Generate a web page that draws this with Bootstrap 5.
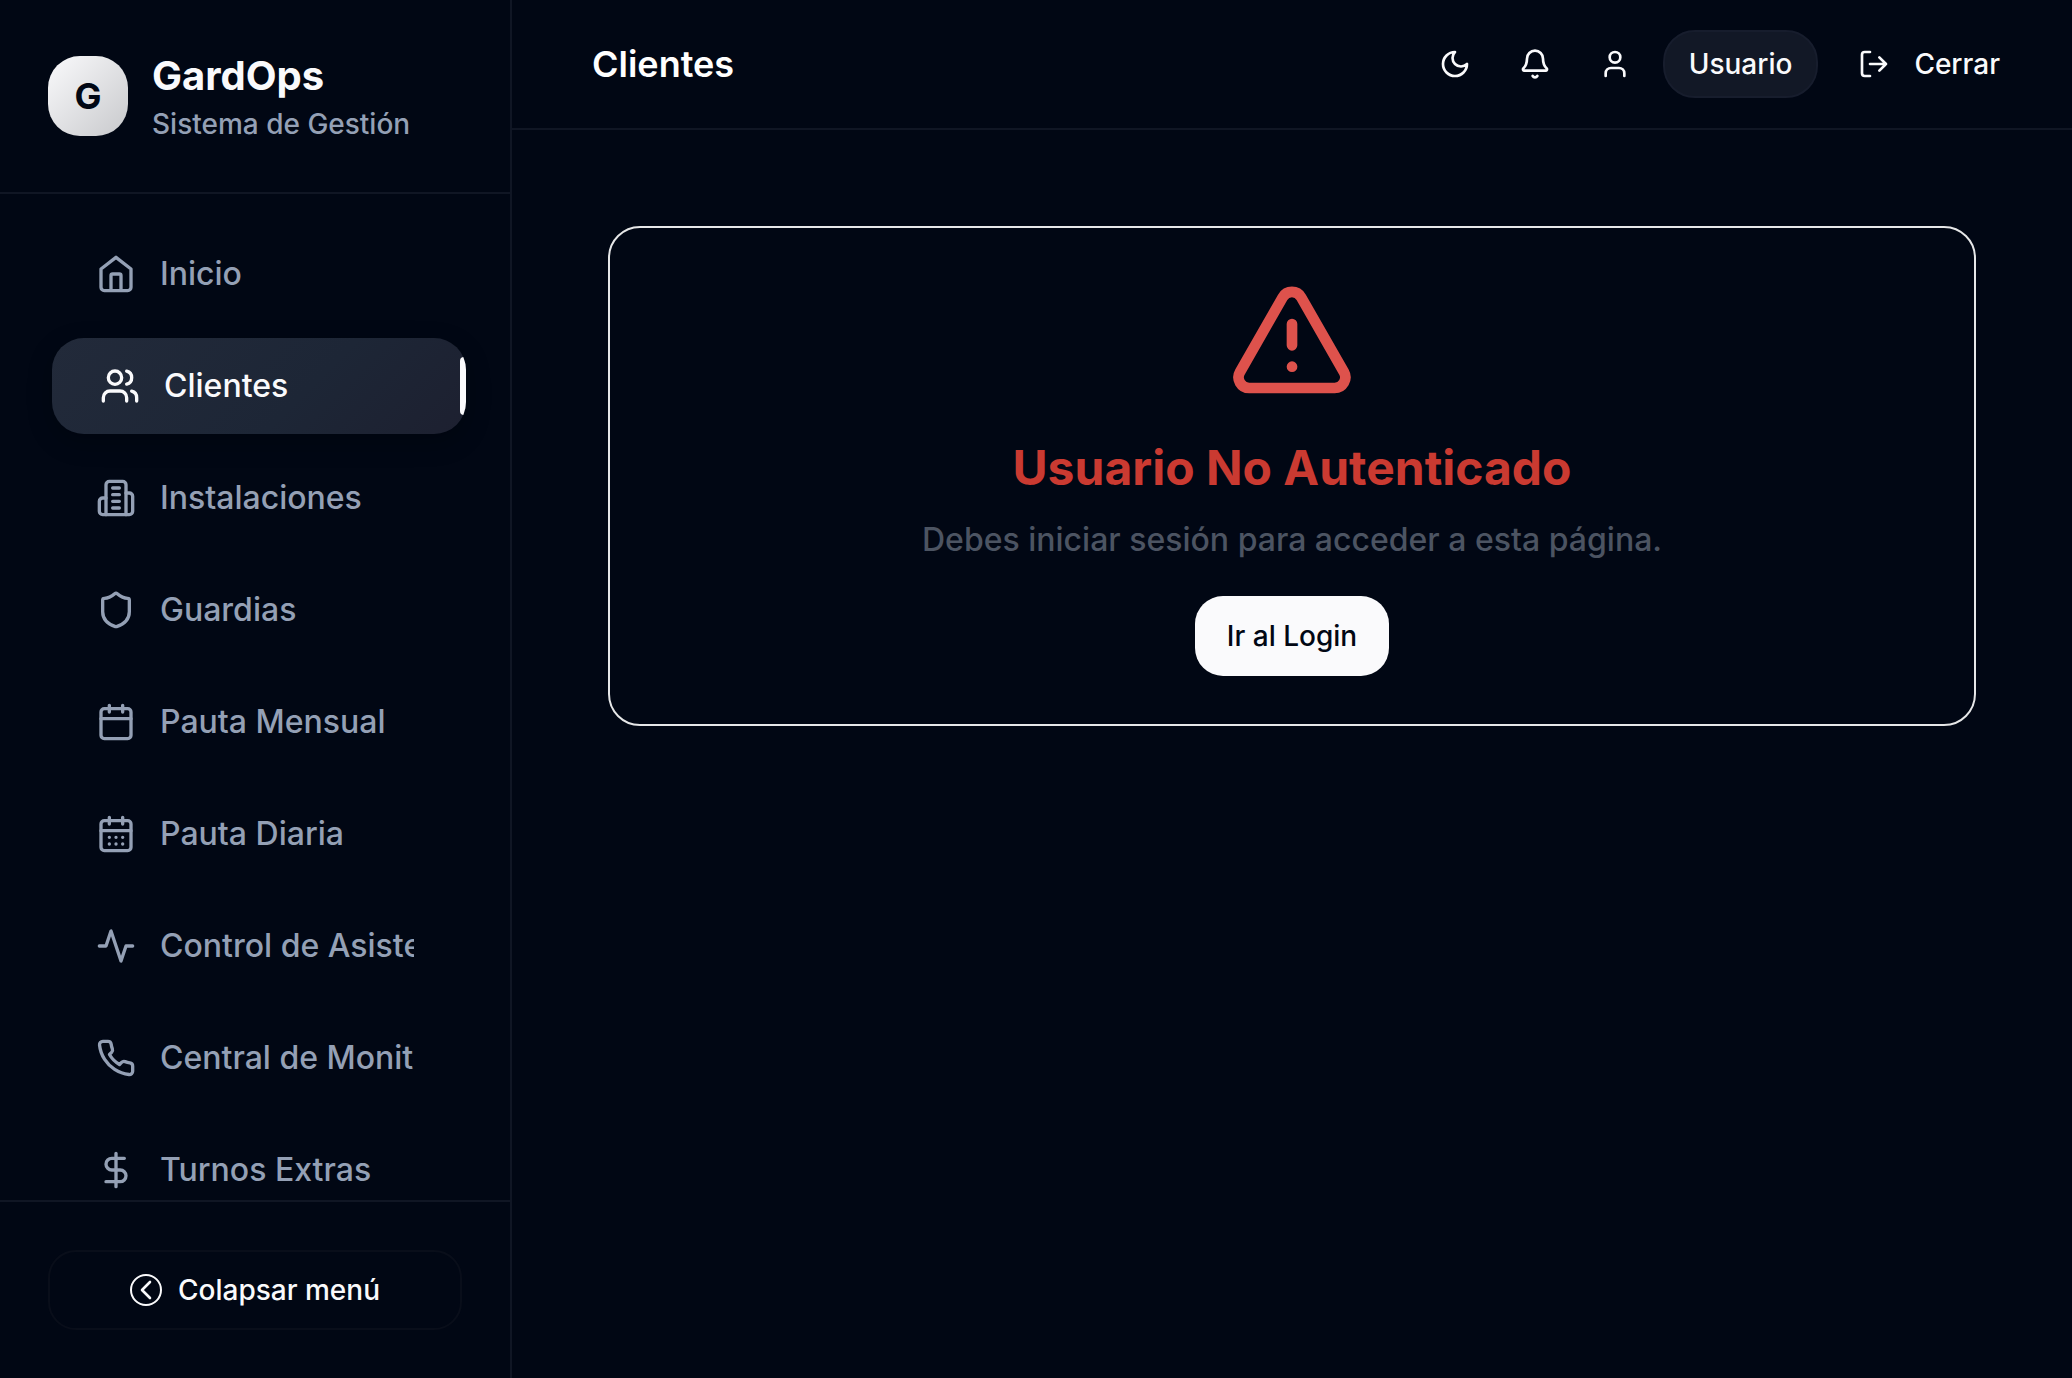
<!DOCTYPE html>
<html lang="es" data-bs-theme="dark">
<head>
<meta charset="utf-8">
<meta name="viewport" content="width=device-width, initial-scale=1">
<title>GardOps – Clientes</title>
<link rel="stylesheet" href="https://cdn.jsdelivr.net/npm/bootstrap@5.3.0/dist/css/bootstrap.min.css">
<style>
  :root { --page: #010714; --line: #101624; --ink: #fafafc; --muted-ink: #94a0b5; }
  body { background: var(--page); color: var(--ink); font-family: Inter, "Liberation Sans", sans-serif; font-size: 28px; line-height: 40px; }
  svg { fill: none; stroke: currentColor; stroke-width: 2; stroke-linecap: round; stroke-linejoin: round; flex-shrink: 0; display: block; }

  .side { width: 512px; border-right: 2px solid var(--line); }
  .side-head { padding: 48px; gap: 24px; border-bottom: 2px solid var(--line); }
  .logo { width: 80px; height: 80px; border-radius: 32px; font-size: 36px; background: linear-gradient(135deg, #fafafc, #c8c9cc); color: var(--page); }
  .brand-name { font-size: 40px; line-height: 56px; }
  .brand-sub { color: var(--muted-ink); font-weight: 500; }
  .side-nav { padding: 32px 48px; gap: 16px; min-height: 0; }
  .side-link { height: 96px; padding: 0 48px; gap: 24px; border-radius: 32px; color: var(--muted-ink); font-size: 32px; font-weight: 500; text-decoration: none; flex-shrink: 0; }
  .side-link:hover { color: var(--ink); }
  .side-link svg { width: 40px; height: 40px; }
  .side-link.active { color: var(--ink); background: linear-gradient(135deg, #222a3a, #1d2636 60%, #1d2030); box-shadow: 0 8px 24px #00000040; transform: translateX(4px); }
  .side-link.active::after { content: ""; position: absolute; right: 0; top: 20%; bottom: 20%; width: 6px; border-radius: 4px 0 0 4px; background: var(--ink); }
  .side-foot { padding: 48px; border-top: 2px solid var(--line); }
  .btn { --bs-btn-color: var(--ink); --bs-btn-font-size: 28px; --bs-btn-line-height: 40px; --bs-btn-font-weight: 500; --bs-btn-border-width: 0; --bs-btn-border-radius: 28px; }
  .btn-collapse { height: 80px; gap: 16px; border: 2px solid #090e1a; }
  .btn-collapse svg, .top-bar svg { width: 32px; height: 32px; }

  .top-bar { padding: 30px 48px 30px 80px; border-bottom: 2px solid var(--line); }
  .top-title { font-size: 36px; line-height: 56px; }
  .top-tools { gap: 16px; }
  .btn-tool { width: 64px; height: 64px; padding: 16px; }
  .btn-user { height: 68px; padding: 0 24px; border: 2px solid #171d2d; border-radius: 32px; background: #121826; }
  .btn-out { height: 64px; padding: 0 24px; gap: 24px; }

  .content-area { padding: 96px; }
  .alert-box { border: 2px solid #e6e7e8; border-radius: 32px; padding: 48px; }
  .alert-box svg { width: 128px; height: 128px; margin-bottom: 32px; color: #de524c; }
  .alert-box h2 { font-size: 48px; line-height: 64px; margin-bottom: 16px; color: #ca3a31; }
  .alert-box p { font-size: 32px; line-height: 48px; font-weight: 500; margin-bottom: 32px; color: #4c5462; }
  .btn-login { height: 80px; padding: 0 32px; --bs-btn-color: var(--page); --bs-btn-bg: #fafafc; --bs-btn-hover-color: var(--page); --bs-btn-hover-bg: #e2e4ea; }
</style>
<script src="https://cdn.jsdelivr.net/npm/bootstrap@5.3.0/dist/js/bootstrap.bundle.min.js" defer></script>
</head>
<body>
<div class="d-flex vh-100 overflow-hidden">
  <aside class="side d-flex flex-column flex-shrink-0">
    <div class="side-head d-flex align-items-center">
      <div class="logo d-flex align-items-center justify-content-center fw-bold">G</div>
      <div>
        <div class="brand-name fw-bold">GardOps</div>
        <div class="brand-sub">Sistema de Gestión</div>
      </div>
    </div>
    <nav class="side-nav d-flex flex-column flex-grow-1 overflow-hidden" aria-label="Principal">
      <a class="side-link d-flex align-items-center" href="#inicio">
        <svg viewBox="0 0 24 24"><path d="M15 21v-8a1 1 0 0 0-1-1h-4a1 1 0 0 0-1 1v8"/><path d="m3 9 9-7 9 7v11a2 2 0 0 1-2 2H5a2 2 0 0 1-2-2z"/></svg>
        <span class="flex-grow-1 overflow-hidden text-nowrap">Inicio</span></a>
      <a class="side-link active position-relative overflow-hidden d-flex align-items-center" href="#clientes" aria-current="page">
        <svg viewBox="0 0 24 24"><path d="M16 21v-2a4 4 0 0 0-4-4H6a4 4 0 0 0-4 4v2"/><circle cx="9" cy="7" r="4"/><path d="M22 21v-2a4 4 0 0 0-3-3.870M16 3.130a4 4 0 0 1 0 7.750"/></svg>
        <span class="flex-grow-1 overflow-hidden text-nowrap">Clientes</span></a>
      <a class="side-link d-flex align-items-center" href="#instalaciones">
        <svg viewBox="0 0 24 24"><path d="M6 22V4a2 2 0 0 1 2-2h8a2 2 0 0 1 2 2v18Z"/><path d="M6 12H4a2 2 0 0 0-2 2v6a2 2 0 0 0 2 2h2M18 9h2a2 2 0 0 1 2 2v9a2 2 0 0 1-2 2h-2M10 6h4M10 10h4M10 14h4M10 18h4"/></svg>
        <span class="flex-grow-1 overflow-hidden text-nowrap">Instalaciones</span></a>
      <a class="side-link d-flex align-items-center" href="#guardias">
        <svg viewBox="0 0 24 24"><path d="M20 13c0 5-3.500 7.500-7.660 8.950a1 1 0 0 1-.67-.01C7.500 20.500 4 18 4 13V6a1 1 0 0 1 1-1c2 0 4.500-1.200 6.240-2.720a1.170 1.170 0 0 1 1.520 0C14.510 3.810 17 5 19 5a1 1 0 0 1 1 1z"/></svg>
        <span class="flex-grow-1 overflow-hidden text-nowrap">Guardias</span></a>
      <a class="side-link d-flex align-items-center" href="#pauta-mensual">
        <svg viewBox="0 0 24 24"><path d="M8 2v4M16 2v4M3 10h18"/><rect x="3" y="4" width="18" height="18" rx="2"/></svg>
        <span class="flex-grow-1 overflow-hidden text-nowrap">Pauta Mensual</span></a>
      <a class="side-link d-flex align-items-center" href="#pauta-diaria">
        <svg viewBox="0 0 24 24"><path d="M8 2v4M16 2v4M3 10h18M8 14h.01M12 14h.01M16 14h.01M8 18h.01M12 18h.01M16 18h.01"/><rect x="3" y="4" width="18" height="18" rx="2"/></svg>
        <span class="flex-grow-1 overflow-hidden text-nowrap">Pauta Diaria</span></a>
      <a class="side-link d-flex align-items-center" href="#asistencia">
        <svg viewBox="0 0 24 24"><path d="M22 12h-4l-3 9L9 3l-3 9H2"/></svg>
        <span class="flex-grow-1 overflow-hidden text-nowrap">Control de Asistencia</span></a>
      <a class="side-link d-flex align-items-center" href="#monitoreo">
        <svg viewBox="0 0 24 24"><path d="M22 16.920v3a2 2 0 0 1-2.180 2 19.790 19.790 0 0 1-8.630-3.070 19.500 19.500 0 0 1-6-6 19.790 19.790 0 0 1-3.070-8.670A2 2 0 0 1 4.110 2h3a2 2 0 0 1 2 1.720 12.840 12.840 0 0 0 .7 2.810 2 2 0 0 1-.45 2.110L8.090 9.910a16 16 0 0 0 6 6l1.270-1.270a2 2 0 0 1 2.110-.45 12.840 12.840 0 0 0 2.810.7A2 2 0 0 1 22 16.920z"/></svg>
        <span class="flex-grow-1 overflow-hidden text-nowrap">Central de Monitoreo</span></a>
      <a class="side-link d-flex align-items-center" href="#turnos-extras">
        <svg viewBox="0 0 24 24"><path d="M12 2v20M17 5H9.500a3.500 3.500 0 0 0 0 7h5a3.500 3.500 0 0 1 0 7H6"/></svg>
        <span class="flex-grow-1 overflow-hidden text-nowrap">Turnos Extras</span></a>
    </nav>
    <div class="side-foot">
      <button type="button" class="btn btn-collapse w-100 d-flex align-items-center justify-content-center">
        <svg viewBox="0 0 32 32"><circle cx="16" cy="16" r="15"/><path d="m20 8-8 8 8 8" stroke-width="2.600"/></svg>
        Colapsar menú
      </button>
    </div>
  </aside>

  <div class="d-flex flex-column flex-grow-1 overflow-auto">
    <header class="top-bar d-flex align-items-center justify-content-between">
      <h1 class="top-title fw-semibold mb-0">Clientes</h1>
      <div class="top-tools d-flex align-items-center">
        <button type="button" class="btn btn-tool" aria-label="Cambiar tema"><svg viewBox="0 0 24 24"><path d="M12 3a6 6 0 0 0 9 9 9 9 0 1 1-9-9Z"/></svg></button>
        <button type="button" class="btn btn-tool" aria-label="Notificaciones"><svg viewBox="0 0 24 24"><path d="M10.268 21a2 2 0 0 0 3.464 0M3.262 15.326A1 1 0 0 0 4 17h16a1 1 0 0 0 .74-1.673C19.410 13.956 18 12.499 18 8A6 6 0 0 0 6 8c0 4.499-1.411 5.956-2.738 7.326"/></svg></button>
        <button type="button" class="btn btn-tool" aria-label="Perfil"><svg viewBox="0 0 24 24"><path d="M19 21v-2a4 4 0 0 0-4-4H9a4 4 0 0 0-4 4v2"/><circle cx="12" cy="7" r="4"/></svg></button>
        <button type="button" class="btn btn-user">Usuario</button>
        <button type="button" class="btn btn-out d-flex align-items-center">
          <svg viewBox="0 0 24 24"><path d="M9 21H5a2 2 0 0 1-2-2V5a2 2 0 0 1 2-2h4M16 17l5-5-5-5M21 12H9"/></svg>
          Cerrar
        </button>
      </div>
    </header>
    <main class="content-area">
      <section class="alert-box d-flex flex-column align-items-center text-center">
        <svg viewBox="0 0 24 24"><path d="m21.730 18-8-14a2 2 0 0 0-3.480 0l-8 14A2 2 0 0 0 4 21h16a2 2 0 0 0 1.730-3M12 9v4M12 17h.01"/></svg>
        <h2 class="fw-bold">Usuario No Autenticado</h2>
        <p>Debes iniciar sesión para acceder a esta página.</p>
        <button type="button" class="btn btn-login">Ir al Login</button>
      </section>
    </main>
  </div>
</div>
</body>
</html>
